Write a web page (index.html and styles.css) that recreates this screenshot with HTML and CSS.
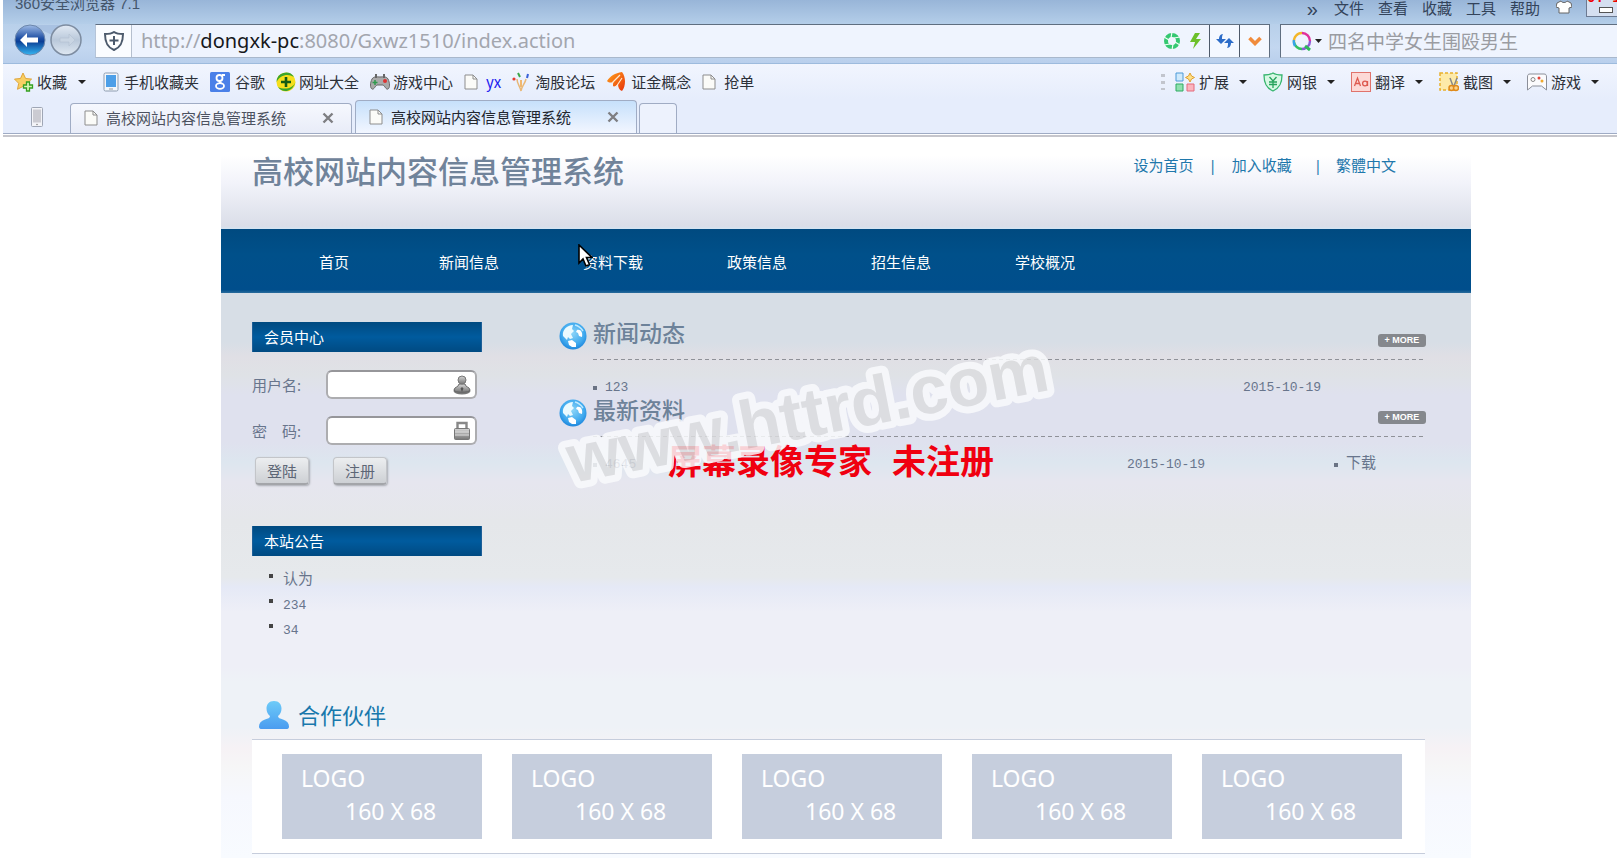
FILE: index.html
```html
<!DOCTYPE html>
<html lang="zh-CN">
<head>
<meta charset="utf-8">
<title>高校网站内容信息管理系统</title>
<link rel="stylesheet" href="styles.css">
</head>
<body>
<svg class="defs" aria-hidden="true">
  <defs>
    <linearGradient id="gBack" x1="0" y1="0" x2="0" y2="1"><stop offset="0" stop-color="#9fbbe6"/><stop offset=".45" stop-color="#1d4ea3"/><stop offset=".55" stop-color="#0b3f96"/><stop offset="1" stop-color="#35b6f2"/></linearGradient>
    <linearGradient id="gFwd" x1="0" y1="0" x2="0" y2="1"><stop offset="0" stop-color="#e2eaf4"/><stop offset=".5" stop-color="#b9c8da"/><stop offset="1" stop-color="#dfe8f2"/></linearGradient>
    <radialGradient id="gGlobe" cx=".5" cy=".4" r=".6"><stop offset="0" stop-color="#8ad4f8"/><stop offset=".7" stop-color="#3fa9ee"/><stop offset="1" stop-color="#1e86dc"/></radialGradient>
    <linearGradient id="gUser" x1="0" y1="0" x2="0" y2="1"><stop offset="0" stop-color="#6dcbf8"/><stop offset="1" stop-color="#4a9cf0"/></linearGradient>
    <linearGradient id="gGrey" x1="0" y1="0" x2="0" y2="1"><stop offset="0" stop-color="#d5d5d5"/><stop offset="1" stop-color="#777"/></linearGradient>
    <linearGradient id="gFlame" x1="0" y1="0" x2="1" y2="1"><stop offset="0" stop-color="#ffa21a"/><stop offset="1" stop-color="#e8330c"/></linearGradient>
    <symbol id="doc" viewBox="0 0 14 16"><path d="M1 1h8l4 4v10H1z" fill="#fbfbf8" stroke="#8d8d8d"/><path d="M9 1v4h4" fill="none" stroke="#8d8d8d"/></symbol>
    <symbol id="globe" viewBox="0 0 28 28"><circle cx="14" cy="14" r="13.5" fill="url(#gGlobe)"/><path d="M4 14C3 8 8 3 14 3l-1 4 2 2-3 3 2 4-3 1-2-2-1 3z" fill="#eafaff"/><path d="M18 8c4-1 6 3 5 7l-3-1-1-3-2-1zM9 19l4-1 4 3v4l-4 0-3-2z" fill="#fff"/><path d="M16 3c4 1 6 3 8 6" stroke="#bfeaff" stroke-width="1.500" fill="none"/></symbol>
  </defs>
</svg>

<header class="browser">
  <div class="titlebar">
    <span class="app-name">360安全浏览器 7.1</span>
    <nav class="menu" aria-label="浏览器菜单">
      <button class="plain chevron">»</button><button class="plain">文件</button><button class="plain">查看</button><button class="plain">收藏</button><button class="plain">工具</button><button class="plain">帮助</button>
      <svg class="shirt" viewBox="0 0 16 14" aria-hidden="true"><path d="M5 1 1 3 0 7l3 1v5h10V8l3-1-1-4-4-2c-1 2-5 2-6 0z" fill="#fff" stroke="#666"/></svg>
    </nav>
    <div class="recorder"><span class="rec-text">0. 1,</span><i class="rec-min"></i></div>
  </div>

  <div class="address-row">
    <svg class="history" viewBox="0 0 68 32" aria-hidden="true">
      <path d="M16 1h36v8q-10 5-18 0z" fill="#a9c2e2"/>
      <circle cx="16" cy="16" r="15" fill="url(#gBack)" stroke="#6b86ab"/><path d="M6 16l7-7v4.500h11v5H13V23z" fill="#fff"/>
      <circle cx="52" cy="16" r="15" fill="url(#gFwd)" stroke="#7d8ca0" stroke-width="1.500"/><path d="M61 16l-6-6v4h-9v4h9v4z" fill="#c9d5e3" stroke="#b3c1d2" stroke-width=".6"/>
    </svg>
    <div class="address">
      <span class="shield"><svg width="20" height="20" viewBox="0 0 20 20" aria-hidden="true"><path d="M10 1c3 2 6 2 9 2 0 8-2 13-9 16C3 16 1 11 1 3c3 0 6 0 9-2z" fill="#fff" stroke="#4c5a6c" stroke-width="2"/><path d="M10 5v9M5.500 9.500h9" stroke="#4c5a6c" stroke-width="2"/></svg></span>
      <div class="url" role="textbox" aria-label="地址栏" contenteditable="true" spellcheck="false">http://<b>dongxk-pc</b>:8080/Gxwz1510/index.action</div>
      <svg class="speed" viewBox="0 0 40 18" aria-hidden="true"><circle cx="9" cy="9" r="6" fill="none" stroke="#35c871" stroke-width="4"/><path d="M9 0 8 6M17 5l-6 1M17 13l-5-3M9 18l1-6M1 13l6-1M1 5l5 3" stroke="#effff4" stroke-width="1.200"/><path d="M32 1 27 10h5l-2 7 8-10h-5l4-6z" fill="#6cc02a"/></svg>
      <button class="addr-btn" aria-label="刷新"><svg width="18" height="16" viewBox="0 0 18 16"><path d="M7 1C4 1 3 4 3 6H0l5 5 5-5H6c0-2 0-3 1-5zM11 15c3 0 4-3 4-5h3l-5-5-5 5h4c0 2 0 3-1 5z" fill="#2c6cc8"/></svg></button>
      <button class="addr-btn" aria-label="展开"><svg width="14" height="10" viewBox="0 0 14 10"><path d="M1.500 2 7 7.500 12.500 2" fill="none" stroke="#f08b3c" stroke-width="3.600"/></svg></button>
    </div>
    <div class="search">
      <svg width="30" height="20" viewBox="0 0 30 20" aria-hidden="true"><g fill="none" stroke-width="2.400"><path d="M10 2a8 8 0 0 1 8 8" stroke="#e0319b"/><path d="M18 10a8 8 0 0 1-8 8" stroke="#8d5bd6"/><path d="M10 18a8 8 0 0 1-8-7" stroke="#35c05f"/><path d="M2 11a8 8 0 0 1 8-9" stroke="#f3b62a"/><path d="M3 15a8 8 0 0 1-1-6" stroke="#36a3e8"/><path d="M13 15l5 4" stroke="#2fb95b" stroke-width="3"/></g><path d="M23 8h7l-3.500 4z" fill="#222"/></svg>
      <input class="search-input" type="text" aria-label="搜索" placeholder="四名中学女生围殴男生">
    </div>
  </div>

  <div class="bookmarks">
    <div class="marks">
      <a href="#" class="mark fav"><svg width="20" height="20" viewBox="0 0 20 20"><path d="m9 1 2.600 5.500 6 .6-4.400 4.200 1.200 6L9 14.400 3.500 17.300l1.200-6L.5 7.100l6-.6z" fill="#f9cf63" stroke="#dfa43a"/><path d="M12.500 10h3v3h3v3h-3v3h-3v-3h-3v-3h3z" fill="#d9f5b8" stroke="#35a021" stroke-width="1.300"/></svg>收藏<i class="caret"></i></a>
      <a href="#" class="mark"><svg width="16" height="20" viewBox="0 0 16 20"><rect x="1" y="1" width="14" height="18" rx="1.500" fill="#f4f7fb" stroke="#8d9cb0"/><path d="M3 3h10v12H3z" fill="#4d9fe8"/><path d="M6 17h4" stroke="#999"/></svg>手机收藏夹</a>
      <a href="#" class="mark"><svg width="20" height="20" viewBox="0 0 20 20"><rect width="20" height="20" rx="1.500" fill="#4a80e8"/><g fill="none" stroke="#fff" stroke-width="1.800"><circle cx="9.500" cy="6" r="3"/><path d="M12 3h3M9.500 9c0 1.500 1 2 2 2.500"/><ellipse cx="10" cy="14" rx="4" ry="2.800"/></g></svg>谷歌</a>
      <a href="#" class="mark tight"><svg width="20" height="20" viewBox="0 0 20 20"><circle cx="10" cy="10" r="9.500" fill="#f6df1c"/><path d="M0.500 10A9.500 9.500 0 0 1 18 5C12 1 4 3 .5 10zM2 15c4 6 14 6 17.500-5C17 17 8 18 2 15z" fill="#3ba52c"/><path d="M10 5v10M5 10h10" stroke="#145c14" stroke-width="2.600"/></svg>网址大全</a>
      <a href="#" class="mark tight"><svg width="20" height="18" viewBox="0 0 20 18"><path d="M2 6c2-3 5-2 8-2s6-1 8 2c2 4 2 9 0 10s-3-3-5-4H7c-2 1-3 5-5 4S0 10 2 6z" fill="#aaa" stroke="#666"/><path d="M6 1v4M14 1v4" stroke="#666" stroke-width="2"/><path d="M5 7v5M2.500 9.500h5" stroke="#2f9a4d" stroke-width="1.500"/><circle cx="15" cy="8" r="2" fill="#d33"/></svg>游戏中心</a>
      <a href="#" class="mark page yx"><svg width="14" height="16"><use href="#doc"/></svg>yx</a>
      <a href="#" class="mark"><svg width="18" height="20" viewBox="0 0 18 20"><path d="M5 7c0 5 3 7 4 12 1-6 4-7 5-12" fill="none" stroke="#e8b878" stroke-width="1.500"/><path d="M9 8v7" stroke="#f0b870" stroke-width="2"/><circle cx="2" cy="7" r="1.600" fill="#e53b32"/><path d="m6 1 2 4" stroke="#3aa648" stroke-width="2"/><path d="m16 2-1 4" stroke="#3a62d8" stroke-width="2"/></svg>淘股论坛</a>
      <a href="#" class="mark"><svg width="20" height="20" viewBox="0 0 20 20"><path d="M1 9C4 4 9 1 16 0c4 5 4 14 0 19-3-1-4-4-4-7-2 2-4 3-5 2 0-2 0-4 1-5-2 2-5 2-7 0z" fill="url(#gFlame)"/><path d="m6 11 8-8M10 15l6-9" stroke="#ffe9cf" stroke-width="1.200"/></svg>证金概念</a>
      <a href="#" class="mark page"><svg width="14" height="16"><use href="#doc"/></svg>抢单</a>
    </div>
    <div class="plugins">
      <i class="grip"></i>
      <button class="plugin"><svg width="20" height="20" viewBox="0 0 20 20"><path d="M1 1h7v8H1z" fill="#cfe9fb" stroke="#4c9ad8"/><path d="M1 12h7v7H1z" fill="#8fe0ae" stroke="#2fab62"/><path d="M12 12h7v7h-7z" fill="#fbb4bd" stroke="#e36b7c"/><path d="m15 1 1.500 3 3 1.500-3 1.500L15 10l-1.500-3-3-1.500 3-1.500z" fill="#fce08a" stroke="#e0a02c"/></svg>扩展<i class="caret"></i></button>
      <button class="plugin"><svg width="20" height="20" viewBox="0 0 20 20"><path d="M10 1c3 2 6 2 9 2 0 8-2 13-9 16C3 16 1 11 1 3c3 0 6 0 9-2z" fill="#d7f8e4" stroke="#35b46d" stroke-width="1.300"/><path d="m6.500 5 3.500 4 3.500-4M10 9v7M6 10h8M6 12.500h8" fill="none" stroke="#26a35c" stroke-width="1.300"/></svg>网银<i class="caret"></i></button>
      <button class="plugin"><svg width="20" height="20" viewBox="0 0 20 20"><rect x=".5" y=".5" width="19" height="19" fill="#fdd9d6" stroke="#e0736c"/><path d="m3.500 14 3-8 3 8M4.500 11.500h4M16.500 9v5" fill="none" stroke="#de5a50" stroke-width="1.300"/><circle cx="14" cy="11.500" r="2.400" fill="none" stroke="#de5a50" stroke-width="1.300"/></svg>翻译<i class="caret"></i></button>
      <button class="plugin"><svg width="20" height="20" viewBox="0 0 20 20"><rect x="1" y="1" width="17" height="17" fill="#fdeaa8" stroke="#e8b02c" stroke-dasharray="3 2" stroke-width="1.500"/><path d="m11 6 3 8M18 6l-3 8" stroke="#888" stroke-width="1.500"/><circle cx="12.500" cy="16" r="2.500" fill="#fbd38a" stroke="#e08a1a" stroke-width="1.500"/><circle cx="17" cy="16" r="2.500" fill="#fbd38a" stroke="#e08a1a" stroke-width="1.500"/></svg>截图<i class="caret"></i></button>
      <button class="plugin"><svg width="20" height="18" viewBox="0 0 20 18"><path d="M3 1h14c2 0 2.500 1 2.500 3v13l-5-4h-9l-5 4V4c0-2 .5-3 2.500-3z" fill="#fbfbfd" stroke="#8b8f99"/><circle cx="6" cy="6.500" r="2" fill="none" stroke="#888"/><circle cx="12" cy="5" r="1.500" fill="#e5443a"/><circle cx="15" cy="8" r="1.500" fill="#f0a92c"/></svg>游戏<i class="caret"></i></button>
    </div>
  </div>

  <div class="tabs">
    <svg class="phone" viewBox="0 0 12 20" aria-hidden="true"><rect x=".5" y=".5" width="11" height="19" rx="1" fill="#f3f4f8" stroke="#9fa6b5"/><path d="M2 2.500h8v13H2z" fill="#cbcbd2"/><circle cx="6" cy="17.500" r=".8" fill="#888"/></svg>
    <div class="tab"><svg width="14" height="16"><use href="#doc"/></svg><span>高校网站内容信息管理系统</span><button class="close" aria-label="关闭"><svg width="12" height="12" viewBox="0 0 12 12"><path d="m1.500 1.500 9 9M10.500 1.500l-9 9" stroke="#7e7e82" stroke-width="2.400"/></svg></button></div>
    <div class="tab active"><svg width="14" height="16"><use href="#doc"/></svg><span>高校网站内容信息管理系统</span><button class="close" aria-label="关闭"><svg width="12" height="12" viewBox="0 0 12 12"><path d="m1.500 1.500 9 9M10.500 1.500l-9 9" stroke="#7e7e82" stroke-width="2.400"/></svg></button></div>
    <button class="new-tab" aria-label="新建标签"></button>
  </div>
</header>

<div class="site">
  <header class="masthead">
    <h1 class="site-title">高校网站内容信息管理系统</h1>
    <div class="quick"><a href="#">设为首页</a><span>|</span><a href="#">加入收藏</a><span class="bar2">|</span><a href="#">繁體中文</a></div>
  </header>

  <nav class="main-nav">
    <a href="#">首页</a><a href="#">新闻信息</a><a href="#">资料下载</a><a href="#">政策信息</a><a href="#">招生信息</a><a href="#">学校概况</a>
  </nav>

  <div class="columns">
    <aside class="side">
      <h2 class="side-title">会员中心</h2>
      <form class="login">
        <div class="field"><label for="user">用户名:</label><span class="box"><input id="user" type="text"><svg width="18" height="20" viewBox="0 0 18 20" aria-hidden="true"><ellipse cx="9" cy="16" rx="8.500" ry="3.500" fill="#777"/><path d="M6 9h6c0 3 5 3 5 6 0 3-16 3-16 0 0-3 5-3 5-6z" fill="url(#gGrey)" stroke="#666"/><circle cx="9" cy="5" r="4" fill="url(#gGrey)" stroke="#777"/><path d="m9 12-1.500 1.500L9 17l1.500-3.500z" fill="#555"/></svg></span></div>
        <div class="field"><label for="pass">密　码:</label><span class="box"><input id="pass" type="password"><svg width="18" height="20" viewBox="0 0 18 20" aria-hidden="true"><path d="M4.500 9V2h9v7" fill="none" stroke="#888" stroke-width="2.400"/><rect x="1.500" y="7.500" width="15" height="11" rx="1" fill="url(#gGrey)" stroke="#777"/><path d="M2 11h14M2 14h14" stroke="#ddd"/></svg></span></div>
        <div class="actions"><button type="button">登陆</button><button type="button">注册</button></div>
      </form>
      <h2 class="side-title">本站公告</h2>
      <ul class="notices"><li><a href="#">认为</a></li><li><a href="#">234</a></li><li><a href="#">34</a></li></ul>
    </aside>

    <main class="feeds">
      <section class="feed">
        <svg class="globe" viewBox="0 0 28 28" aria-hidden="true"><use href="#globe"/></svg>
        <div class="feed-body">
          <div class="feed-head"><h2>新闻动态</h2><a href="#" class="more">+ MORE</a></div>
          <div class="entry news"><a href="#" class="dot">123</a><time>2015-10-19</time></div>
        </div>
      </section>
      <section class="feed">
        <svg class="globe" viewBox="0 0 28 28" aria-hidden="true"><use href="#globe"/></svg>
        <div class="feed-body">
          <div class="feed-head"><h2>最新资料</h2><a href="#" class="more">+ MORE</a></div>
          <div class="entry files"><a href="#" class="dot">4645</a><time>2015-10-19</time><a href="#" class="dot">下载</a></div>
        </div>
      </section>
    </main>
  </div>

  <section class="partners">
    <h2 class="partners-title"><svg width="30" height="28" viewBox="0 0 30 28" aria-hidden="true"><path d="M15 0c5 0 7.500 3.500 7.500 7.500 0 3.500-1.500 6-3.500 7.500 0 2 2 2.500 5 3.500 4 1.500 6 3.500 6 7 0 2-1 2.500-3 2.500H3c-2 0-3-.5-3-2.500 0-3.500 2-5.500 6-7 3-1 5-1.500 5-3.500-2-1.500-3.500-4-3.500-7.500C7.500 3.500 10 0 15 0z" fill="url(#gUser)"/></svg>合作伙伴</h2>
    <div class="logos">
      <a href="#" class="logo"><span>LOGO</span><span class="size">160 X 68</span></a>
      <a href="#" class="logo"><span>LOGO</span><span class="size">160 X 68</span></a>
      <a href="#" class="logo"><span>LOGO</span><span class="size">160 X 68</span></a>
      <a href="#" class="logo"><span>LOGO</span><span class="size">160 X 68</span></a>
      <a href="#" class="logo"><span>LOGO</span><span class="size">160 X 68</span></a>
    </div>
  </section>
</div>

<div class="trial"><span>屏幕录像专家</span> <span>未注册</span></div>
<svg class="watermark" viewBox="0 0 520 180" aria-hidden="true">
  <text x="20" y="143" transform="rotate(-11 20 143)">www.httrd.com</text>
</svg>
<svg class="pointer" viewBox="0 0 15 24" aria-hidden="true"><path d="M1 1v18l4-4 3 7 3.500-1.500-3-7H14z" fill="#fff" stroke="#000" stroke-width="1.600"/></svg>
</body>
</html>
```
FILE: styles.css
```css
* { box-sizing: border-box; }
body {
  margin: 0;
  position: relative;
  min-height: 100vh;
  overflow: hidden;
  background: #fff;
  font: 15px/20px "Noto Sans", "Noto Sans CJK SC", sans-serif;
}
h1, h2, ul { margin: 0; padding: 0; }
h2 { font-weight: 400; }
a { color: inherit; text-decoration: none; }
button { font: inherit; color: inherit; padding: 0; cursor: pointer; }
svg { flex: none; }
.defs { position: absolute; width: 0; height: 0; }

/* Browser frame */
.browser {
  margin-left: 3px;
  height: 137px;
  border-bottom: 2px solid #c6c6cc;
  color: #2c3038;
  font-family: "Noto Sans CJK SC", sans-serif;
}
.titlebar {
  display: flex;
  align-items: flex-start;
  height: 24px;
  background: linear-gradient(#98b5d8, #b4cee9);
  font-family: "Liberation Sans", "Noto Sans CJK SC", sans-serif;
}
.app-name { padding-left: 12px; line-height: 8px; color: #44566c; }
.menu { display: flex; gap: 14px; margin-left: auto; line-height: 17px; color: #33435a; }
.plain { border: 0; background: none; line-height: 17px; }
.chevron { margin-right: 2px; font-size: 20px; line-height: 14px; }
.shirt { width: 16px; height: 14px; margin-left: 2px; }
.recorder {
  width: 31px;
  height: 17px;
  margin-left: 14px;
  border: 1px solid #6c7a92;
  border-top: 0;
  border-right: 0;
  background: #d5dff0;
  position: relative;
}
.rec-text { position: absolute; left: 0; top: -8px; font: bold 14px/12px "Liberation Mono", monospace; color: #e00; white-space: nowrap; }
.rec-min { position: absolute; left: 12px; top: 7px; width: 14px; height: 6px; border: 1px solid #555; background: #fff; }

.address-row {
  display: flex;
  align-items: flex-start;
  height: 40px;
  padding-left: 11px;
  background: linear-gradient(#b8d0ea, #c3d7f0 60%, #b9cfec);
  border-bottom: 1px solid #9dbbdd;
}
.history { width: 68px; height: 32px; margin-right: 13px; }
.address, .search {
  display: flex;
  align-items: center;
  height: 34px;
  border: 1px solid #5f6e80;
  border-bottom-color: #a9b8cc;
  background: #eff4fe;
}
.address { flex: 1; border-left-color: #b5c4d8; }
.shield { display: flex; align-items: center; justify-content: center; width: 36px; height: 32px; border-right: 1px solid #b5bfce; background: #fafcff; }
.url { flex: 1; padding-left: 9px; font: 20px/30px "Noto Sans", sans-serif; color: #a3a6ae; outline: 0; }
.url b { font-weight: 400; color: #16181c; }
.speed { width: 40px; height: 18px; margin-right: 6px; }
.addr-btn { display: flex; align-items: center; justify-content: center; width: 30px; height: 32px; border: 0; border-left: 1px solid #4e5a6a; background: #f4f8ff; }
.search { width: 337px; margin-left: 10px; padding-left: 11px; border-right: 0; }
.search-input { flex: 1; min-width: 0; margin-left: 4px; border: 0; outline: 0; background: none; font: 19px/28px "Noto Sans CJK SC", sans-serif; }
.search-input::placeholder { color: #9a9ca2; opacity: 1; }

.bookmarks { display: flex; align-items: center; height: 35px; padding-left: 11px; background: linear-gradient(#f1f5fe, #e6edfc); }
.marks, .plugins { display: flex; align-items: center; }
.marks { gap: 11px; }
.mark { display: flex; align-items: center; gap: 5px; white-space: nowrap; }
.mark.fav { gap: 3px; margin-right: 6px; }
.mark.tight { gap: 3px; }
.mark.page { gap: 8px; }
.yx { color: #1a1af0; }
.caret { width: 0; border: 4px solid transparent; border-top-color: #222; border-bottom: 0; margin-left: 8px; }
.plugins { margin-left: auto; padding-right: 18px; gap: 16px; }
.plugin { display: flex; align-items: center; gap: 3px; border: 0; background: none; }
.plugin .caret { margin-left: 7px; }
.plugin svg { margin-right: 1px; }
.grip { width: 4px; height: 16px; margin-right: -6px; background: repeating-linear-gradient(#c2c5cd 0 3px, transparent 3px 7px); }

.tabs { display: flex; align-items: flex-end; height: 35px; padding-left: 28px; background: #e6edfc; border-bottom: 1px solid #9fabc4; }
.phone { width: 12px; height: 20px; margin: 0 27px 6px 0; }
.tab {
  display: flex;
  align-items: center;
  width: 282px;
  height: 30px;
  padding: 0 17px 2px 13px;
  border: 1px solid #a0acc4;
  border-bottom: 0;
  border-radius: 4px 4px 0 0;
  background: linear-gradient(#f6f8fe, #e8ecf8);
}
.tab span { margin-left: 8px; color: #4c5260; }
.tab.active { height: 33px; margin-left: 3px; padding-bottom: 0; background: linear-gradient(#c6e0fb, #f2f6ff); }
.tab.active span { color: #22262e; }
.close { display: flex; margin-left: auto; border: 0; background: none; }
.new-tab { width: 38px; height: 30px; margin-left: 2px; border: 1px solid #a0acc4; border-bottom: 0; border-radius: 4px 4px 0 0; background: #edf2fd; }

/* School site */
.site {
  margin: 0 146px 0 221px;
  color: #68758c;
  background: linear-gradient(#d7dee6 0, #d7dee6 205px, #e0dfe5 220px, #dfe2e6 238px, #dfe1ee 258px, #dfe1ee 305px, #dde6ef 325px, #e6e6ef 345px, #e5e7ea 385px, #e6e9ec 440px, #e5e9f6 450px, #eeeff7 475px, #eeeff7 530px, #eef2f7 545px, #eef2f7 590px, #f6f2f5 612px, #f6f6f7 630px, #f6f8fe 660px, #f8fbff 721px);
}
.masthead {
  display: flex;
  justify-content: space-between;
  align-items: flex-start;
  height: 92px;
  padding: 15px 75px 0 31px;
  background: linear-gradient(#fff 20%, #f2f3fa 50%, #dadee8 97%, #d3e4f2);
}
.site-title { font: 500 31px/36px "Noto Sans CJK SC", sans-serif; color: #70839a; }
.quick { display: flex; line-height: 26px; color: #1f78ac; }
.quick span { margin: 0 15px; }
.quick .bar2 { margin: 0 14px 0 22px; }
.main-nav {
  display: flex;
  gap: 84px;
  height: 64px;
  padding-left: 98px;
  color: #fff;
  line-height: 66px;
  background: linear-gradient(#004a80, #00508a 40%, #004e8c 95%, #2a6c9c);
}
.main-nav a { min-width: 36px; }

.columns { display: flex; padding: 24px 45px 56px 31px; gap: 77px; }
.side { width: 230px; padding-top: 5px; }
.side-title {
  height: 30px;
  padding-left: 11px;
  font-size: 15px;
  line-height: 30px;
  color: #fff;
  border: 1px solid #1d5f98;
  border-width: 0 1px;
  background: linear-gradient(#004a80, #005b9e 50%, #004a82);
}
.login { display: flex; flex-direction: column; gap: 17px; padding-top: 18px; margin-bottom: 41px; }
.field { display: flex; align-items: center; }
.field label { width: 74px; }
.box {
  display: flex;
  align-items: center;
  width: 151px;
  height: 29px;
  padding-right: 4px;
  border: 2px solid #adadb0;
  border-top-color: #96969a;
  border-radius: 6px;
  background: #fff;
}
.box input { flex: 1; min-width: 0; height: 22px; border: 0; outline: 0; background: none; }
.actions { display: flex; gap: 24px; margin-top: -5px; padding-left: 3px; }
.actions button {
  width: 54px;
  height: 28px;
  border: 1px solid #c3c5c9;
  border-bottom: 2px solid #a3a5a9;
  border-radius: 4px;
  background: linear-gradient(#eceef0, #cdd0d4);
  color: #5d6676;
  box-shadow: 1px 1px 2px #a9acb2;
}
.notices { list-style: none; padding: 12px 0 0 17px; line-height: 25px; }
.notices li { display: flex; gap: 10px; }
.notices li::before { content: ""; width: 4px; height: 4px; margin-top: 6px; background: #444; }
.notices a, .entry { font-family: "Liberation Mono", "Noto Sans CJK SC", monospace; font-size: 13px; }
.notices li:first-child a, .files .dot:last-child { font-size: 15px; }

.feeds { flex: 1; }
.feed { display: flex; }
.globe { width: 28px; height: 28px; margin: 5px 6px 0 0; }
.feed-body { flex: 1; }
.feed-head {
  display: flex;
  justify-content: space-between;
  height: 43px;
  background: repeating-linear-gradient(90deg, #8f9198 0 4px, transparent 4px 7px) bottom / 100% 1px no-repeat;
}
.feed-head h2 { font-size: 23px; font-weight: 500; line-height: 32px; color: #6d8299; }
.more {
  width: 48px;
  height: 13px;
  margin-top: 17px;
  border-radius: 3px;
  background: #85888d;
  color: #fff;
  font: bold 9px/13px "Liberation Sans", sans-serif;
  text-align: center;
}
.entry { display: grid; height: 34px; padding-top: 20px; line-height: 16px; }
.news { grid-template-columns: 1fr 183px; }
.files { grid-template-columns: 1fr 207px 92px; }
.dot { display: flex; align-items: center; gap: 8px; }
.dot::before { content: ""; width: 4px; height: 4px; background: #6a7384; }

.partners { padding: 0 46px 4px 31px; }
.partners-title { display: flex; align-items: center; gap: 9px; height: 32px; padding-left: 7px; font-size: 22px; color: #1878ac; }
.logos {
  display: flex;
  gap: 30px;
  margin-top: 8px;
  padding: 14px 23px 14px 30px;
  border: 1px solid #c6cddc;
  border-width: 1px 0;
  background: #fff;
}
.logo { display: flex; flex: 1; flex-direction: column; height: 85px; padding: 8px 19px; background: #c6cedd; color: #fff; font-size: 23px; line-height: 33px; }
.size { padding-left: 44px; }

/* Floating layers */
.trial { position: absolute; left: 668px; top: 440px; display: flex; gap: 20px; font: bold 34px/40px "Noto Sans CJK SC", sans-serif; color: #f00010; white-space: nowrap; }
.watermark { position: absolute; left: 552px; top: 340px; width: 520px; height: 180px; opacity: .84; pointer-events: none; }
.watermark text { font: bold 68px "Liberation Sans", sans-serif; fill: #dcdddf; stroke: #fafbfd; stroke-width: 14px; stroke-linejoin: round; paint-order: stroke; }
.pointer { position: absolute; left: 578px; top: 244px; width: 15px; height: 24px; }
```
